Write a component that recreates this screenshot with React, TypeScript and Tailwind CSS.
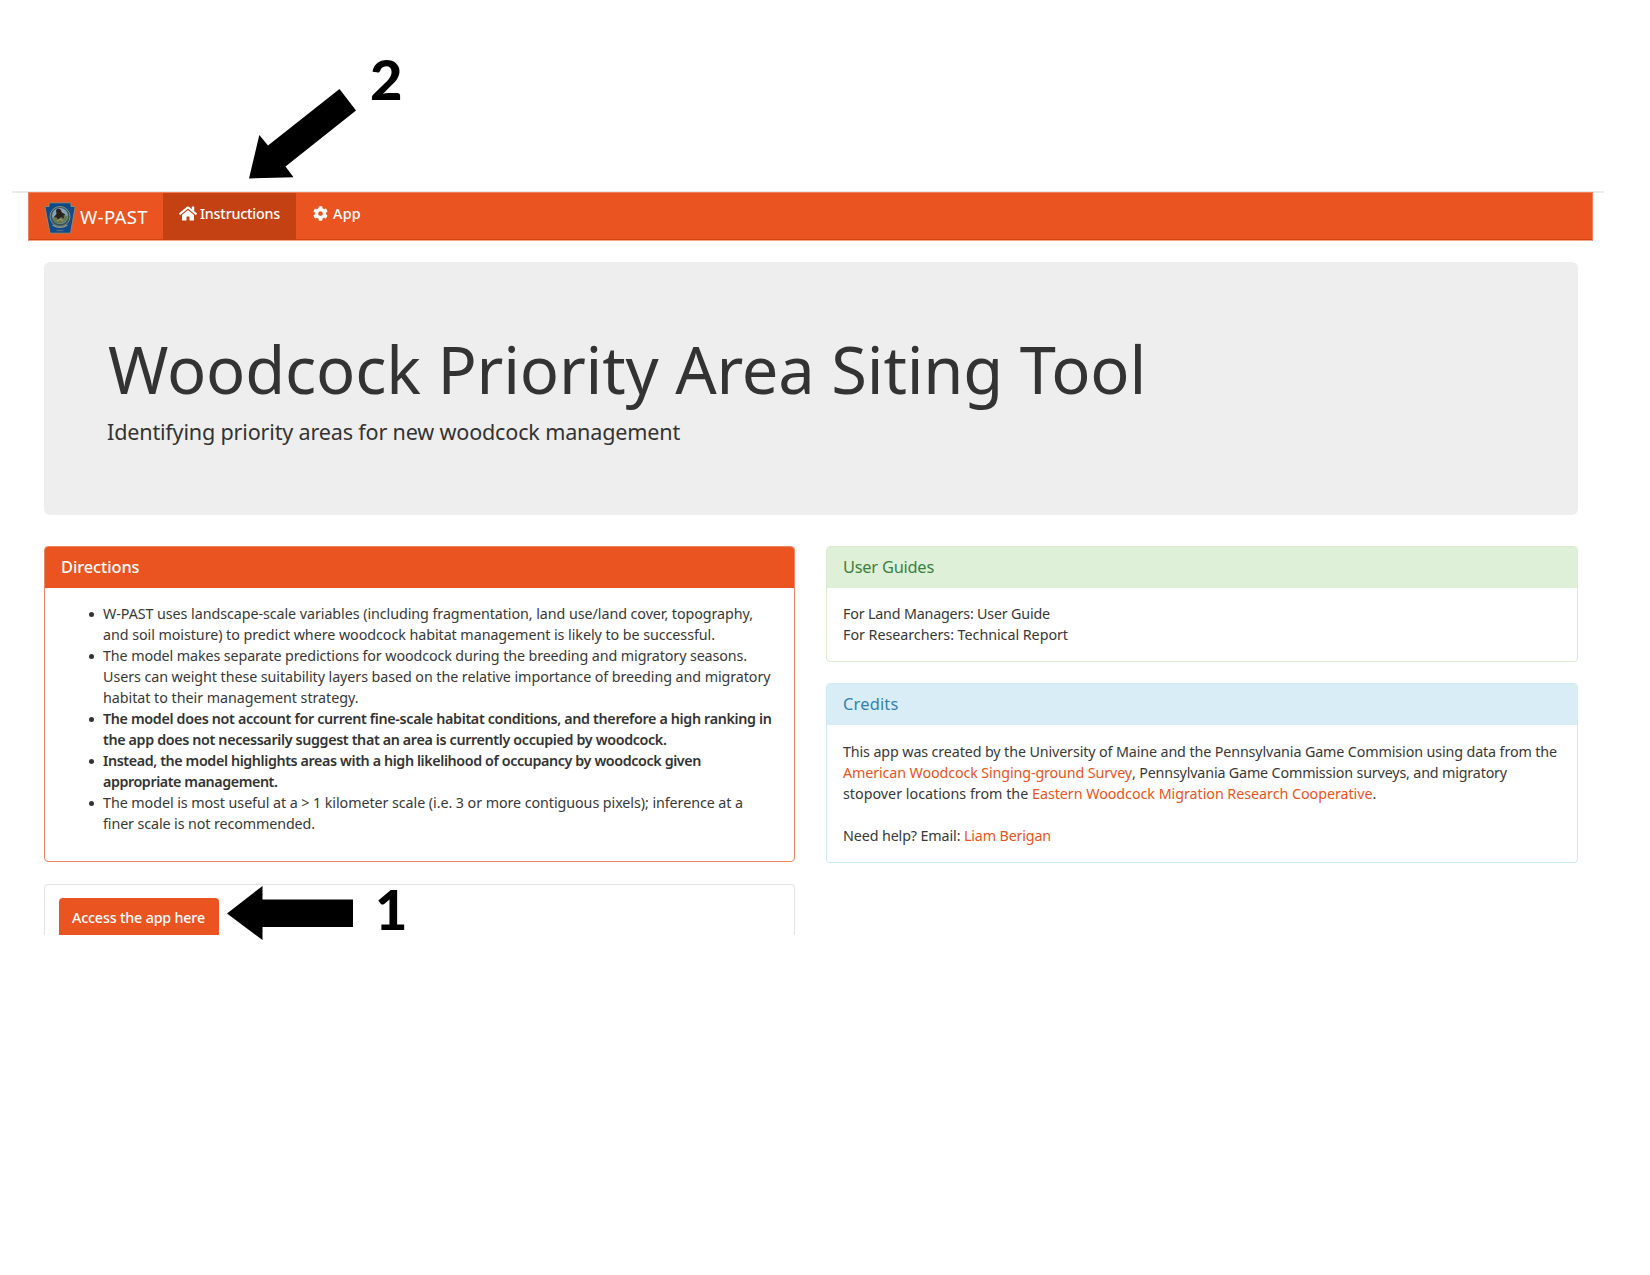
import { useLayoutEffect, useRef, useState } from "react";
import type { ReactNode } from "react";
import { FaCog, FaHome } from "react-icons/fa";

/** One line of text whose tracking is adjusted so that it fills `width` pixels. */
function Line({ width, className = "", children }: { width: number; className?: string; children: string }) {
  const ref = useRef<HTMLSpanElement>(null);
  const [tracking, setTracking] = useState(0);
  useLayoutEffect(() => {
    const el = ref.current;
    if (!el) return;
    const previous = el.style.letterSpacing;
    el.style.letterSpacing = "0px";
    const natural = el.getBoundingClientRect().width;
    el.style.letterSpacing = previous;
    setTracking((width - natural) / children.length);
  }, [width, children]);
  return (
    <span ref={ref} className={`inline-block whitespace-pre ${className}`} style={{ letterSpacing: `${tracking}px` }}>
      {children}
    </span>
  );
}

function Keystone() {
  return (
    <svg viewBox="0 0 32 32" className="mt-[2px] h-8 w-8">
      <path d="M5 .8h22v3.7h4.2l-4.700 26.700H6L.8 4.500H5z" fill="#0f4a8a" stroke="#a08a68" strokeWidth="0.9" />
      <circle cx="16" cy="14.500" r="10" fill="#35545f" stroke="#9a9678" strokeWidth="0.9" />
      <circle cx="16" cy="14" r="8" fill="#7fa3b8" />
      <path d="M8.500 16c3-2 4-1 7-3s5 0 8 1l-1 4c-3 4-9 5-12 2z" fill="#66764f" />
      <path d="M12 8l2-1.500 2.500 1 1.500 3 3.500 2-2 1 .5 3-3-1.500-3 3-1-2.500-3-.5 2.500-3z" fill="#2a211c" />
      <path d="M13 19l3-2 3 2M18 9.500l2.500 1.500" stroke="#c0a67e" strokeWidth="0.9" fill="none" />
      <path d="M8.500 23q7.500 5 15 0" fill="none" stroke="#8f9a86" strokeWidth="1.200" />
      <path d="M12.500 28.500h7" stroke="#51687c" strokeWidth="1.500" />
    </svg>
  );
}

interface PanelProps {
  frame: string;
  header: string;
  title: string;
  titleWidth: number;
  children: ReactNode;
}

function Panel({ frame, header, title, titleWidth, children }: PanelProps) {
  return (
    <section className={`overflow-hidden rounded-[4px] border bg-white ${frame}`}>
      <h2 className={`flex h-[41px] items-center px-4 pb-px text-[16.4px] ${header}`}>
        <Line width={titleWidth}>{title}</Line>
      </h2>
      {children}
    </section>
  );
}

const directions: { bold?: boolean; lines: [string, number][] }[] = [
  {
    lines: [
      ["W-PAST uses landscape-scale variables (including fragmentation, land use/land cover, topography,", 650],
      ["and soil moisture) to predict where woodcock habitat management is likely to be successful.", 612],
    ],
  },
  {
    lines: [
      ["The model makes separate predictions for woodcock during the breeding and migratory seasons.", 644],
      ["Users can weight these suitability layers based on the relative importance of breeding and migratory", 667.5],
      ["habitat to their management strategy.", 255.5],
    ],
  },
  {
    bold: true,
    lines: [
      ["The model does not account for current fine-scale habitat conditions, and therefore a high ranking in", 668.5],
      ["the app does not necessarily suggest that an area is currently occupied by woodcock.", 563.5],
    ],
  },
  {
    bold: true,
    lines: [
      ["Instead, the model highlights areas with a high likelihood of occupancy by woodcock given", 598],
      ["appropriate management.", 174.5],
    ],
  },
  {
    lines: [
      ["The model is most useful at a > 1 kilometer scale (i.e. 3 or more contiguous pixels); inference at a", 640],
      ["finer scale is not recommended.", 212],
    ],
  },
];

export default function App() {
  return (
    <div className="relative h-[1275px] w-[1650px] overflow-hidden bg-white pt-[191px] font-['Noto_Sans',sans-serif] text-[14.3px] leading-[21.05px] text-[#383838]">
      <div className="ml-3 h-0.5 w-[1592px] bg-[#ebebeb]" />

      <nav className="-mt-px ml-7 flex h-[49px] w-[1565px] border border-[#ee7f59] border-b-[#f0a489] bg-[#e95420] text-white shadow-[inset_0_-1px_0_#d44412]">
        <a className="flex w-[134px] items-center pl-[15px]">
          <Keystone />
          <Line width={68} className="ml-1 text-[18.6px]">
            W-PAST
          </Line>
        </a>
        <a className="flex h-[47px] w-[133px] items-start bg-[#c34113] pl-[16px] pt-[10px]">
          <FaHome className="mt-[2px] h-[17px] w-[18px]" />
          <Line width={80} className="ml-[3px] font-medium">
            Instructions
          </Line>
        </a>
        <a className="flex items-start pl-[17px] pt-[10px]">
          <FaCog className="mt-[3px] h-[15px] w-[15px]" />
          <Line width={28} className="ml-[5px] font-medium">
            App
          </Line>
        </a>
      </nav>

      <main className="ml-[44px] w-[1534px] pt-[21px]">
        <header className="h-[253px] rounded-[6px] bg-[#eeeeee] pl-[63px] pt-[71px] text-[#333333]">
          <h1 className="pl-px text-[65px] leading-[73px]">
            <Line width={1038}>Woodcock Priority Area Siting Tool</Line>
          </h1>
          <p className="mt-[10px] text-[21.6px] leading-[31px]">
            <Line width={573}>Identifying priority areas for new woodcock management</Line>
          </p>
        </header>

        <div className="mt-[31px] grid grid-cols-[751px_752px] gap-[31px]">
          <div>
            <Panel
              frame="h-[316px] border-[#ef8560]"
              header="bg-[#e95420] text-white font-medium"
              title="Directions"
              titleWidth={78.5}
            >
              <ul className="pl-[58px] pt-[15px]">
                {directions.map((item, i) => (
                  <li key={i} className={`flex ${item.bold ? "font-semibold text-[#333333]" : ""}`}>
                    <span className="-ml-[14px] mr-[10px] mt-[9px] h-[5px] w-[5px] shrink-0 rounded-full bg-[#333333]" />
                    <div className="-ml-px">
                      {item.lines.map(([text, width]) => (
                        <div key={text} className="h-[21.05px]">
                          <Line width={width}>{text}</Line>
                        </div>
                      ))}
                    </div>
                  </li>
                ))}
              </ul>
            </Panel>
            <div className="mt-[22px] h-[51px] rounded-t-[4px] border border-b-0 border-[#e4e4e4] pl-[14px] pt-[13px]">
              <div className="h-[37px] w-[160px] rounded-t-[4px] bg-[#e95420] pl-[13px] pt-[9px] text-white">
                <Line width={133} className="font-medium">
                  Access the app here
                </Line>
              </div>
            </div>
          </div>

          <div>
            <Panel
              frame="h-[116px] border-[#dcebcd]"
              header="bg-[#dff0d8] text-[#3c8040]"
              title="User Guides"
              titleWidth={91}
            >
              <div className="pl-4 pt-[15px]">
                <div className="h-[21px]">
                  <Line width={207}>For Land Managers: User Guide</Line>
                </div>
                <div className="h-[21px]">
                  <Line width={225}>For Researchers: Technical Report</Line>
                </div>
              </div>
            </Panel>
            <Panel
              frame="mt-[21px] h-[180px] border-[#cdebf2]"
              header="bg-[#d9edf7] text-[#3181b0]"
              title="Credits"
              titleWidth={55.5}
            >
              <div className="pl-4 pt-[16px]">
                <div className="h-[21px]">
                  <Line width={714}>
                    This app was created by the University of Maine and the Pennsylvania Game Commision using data from the
                  </Line>
                </div>
                <div className="flex h-[21px]">
                  <Line width={289} className="text-[#e95420]">
                    American Woodcock Singing-ground Survey
                  </Line>
                  <Line width={375}>, Pennsylvania Game Commission surveys, and migratory</Line>
                </div>
                <div className="flex h-[21px]">
                  <Line width={189}>stopover locations from the </Line>
                  <Line width={340.5} className="text-[#e95420]">
                    Eastern Woodcock Migration Research Cooperative
                  </Line>
                  <span>.</span>
                </div>
                <div className="mt-[21px] flex h-[21px]">
                  <Line width={121}>Need help? Email: </Line>
                  <Line width={87} className="text-[#e95420]">
                    Liam Berigan
                  </Line>
                </div>
              </div>
            </Panel>
          </div>
        </div>
      </main>

      {/* Numbered callouts drawn over the page */}
      <svg viewBox="0 0 108 90" className="absolute left-[249px] top-[89px] h-[90px] w-[108px]">
        <polygon points="0,89.5 10.3,46 19,56.5 90.5,0 107,21.5 36.500,77.500 44.500,88.300" fill="#000" />
      </svg>
      <span className="absolute left-[370px] top-[49px] font-['Lato',sans-serif] text-[56px] font-black leading-[60px] text-black">
        2
      </span>
      <svg viewBox="0 0 126 54" className="absolute left-[227px] top-[885.5px] h-[54px] w-[126px]">
        <polygon points="0,27.500 35.500,0 35.500,13.500 126,13.500 126,41 35.500,41 35.500,54" fill="#000" />
      </svg>
      <span className="absolute left-[375px] top-[879px] font-['Lato',sans-serif] text-[56px] font-black leading-[60px] text-black">
        1
      </span>
    </div>
  );
}
